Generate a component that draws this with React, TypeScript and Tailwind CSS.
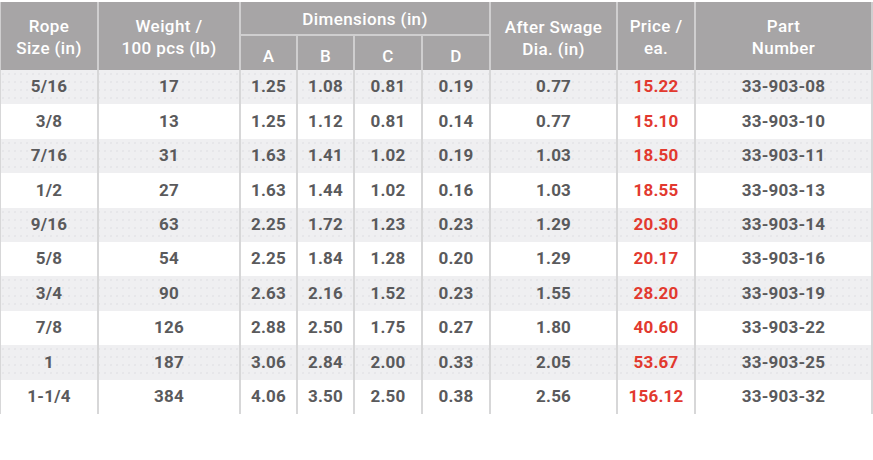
const rows = [
  ["5/16", "17", "1.25", "1.08", "0.81", "0.19", "0.77", "15.22", "33-903-08"],
  ["3/8", "13", "1.25", "1.12", "0.81", "0.14", "0.77", "15.10", "33-903-10"],
  ["7/16", "31", "1.63", "1.41", "1.02", "0.19", "1.03", "18.50", "33-903-11"],
  ["1/2", "27", "1.63", "1.44", "1.02", "0.16", "1.03", "18.55", "33-903-13"],
  ["9/16", "63", "2.25", "1.72", "1.23", "0.23", "1.29", "20.30", "33-903-14"],
  ["5/8", "54", "2.25", "1.84", "1.28", "0.20", "1.29", "20.17", "33-903-16"],
  ["3/4", "90", "2.63", "2.16", "1.52", "0.23", "1.55", "28.20", "33-903-19"],
  ["7/8", "126", "2.88", "2.50", "1.75", "0.27", "1.80", "40.60", "33-903-22"],
  ["1", "187", "3.06", "2.84", "2.00", "0.33", "2.05", "53.67", "33-903-25"],
  ["1-1/4", "384", "4.06", "3.50", "2.50", "0.38", "2.56", "156.12", "33-903-32"],
];

const widths = [97, 142, 57, 57, 68, 68, 127, 78, 179];

export default function App() {
  const th =
    "border-l-2 border-[#cfcecf] bg-[#a7a5a6] text-white font-medium text-center align-middle leading-[22px] text-[17px] tracking-[0.4px]";
  return (
    <div className="w-[873px] h-[460px] bg-white pt-[2px]" style={{ fontFamily: "Roboto, 'Liberation Sans', sans-serif" }}>
      <table className="table-fixed border-separate border-spacing-0 w-[873px]">
        <colgroup>
          {widths.map((w, i) => (
            <col key={i} style={{ width: w }} />
          ))}
        </colgroup>
        <thead>
          <tr className="h-[34px]">
            <th rowSpan={2} className={th + " !border-l-1 pt-[2px]"}>
              Rope
              <br />
              Size (in)
            </th>
            <th rowSpan={2} className={th + " pt-[2px]"}>
              Weight /
              <br />
              100 pcs (lb)
            </th>
            <th colSpan={4} className={th + " border-b-2 pt-[2px]"}>
              Dimensions (in)
            </th>
            <th rowSpan={2} className={th + " pt-[4px]"}>
              After Swage
              <br />
              Dia. (in)
            </th>
            <th rowSpan={2} className={th + " pt-[2px]"}>
              Price /
              <br />
              ea.
            </th>
            <th rowSpan={2} className={th + " border-r-2 pt-[2px]"}>
              Part
              <br />
              Number
            </th>
          </tr>
          <tr className="h-[34px]">
            {["A", "B", "C", "D"].map((l) => (
              <th key={l} className={th + " pt-[5px]"}>
                {l}
              </th>
            ))}
          </tr>
        </thead>
        <tbody>
          {rows.map((r, i) => (
            <tr
              key={i}
              className={
                i % 2 === 0
                  ? "h-[34.4px] bg-[#efeff1] bg-[radial-gradient(circle,#e6e6e9_0.7px,transparent_1px)] bg-[length:6px_8px]"
                  : "h-[34.4px] bg-white"
              }
            >
              {r.map((c, j) => (
                <td
                  key={j}
                  className={
                    "border-[#d7d7d8] text-center align-middle text-[17px] font-bold tracking-[0.2px] " +
                    (j === 0 ? "border-l-1 " : "border-l-2 ") +
                    (j === 8 ? "border-r-2 " : "") +
                    (j === 7 ? "text-[#e2392f]" : "text-[#5a5a5c]")
                  }
                >
                  {c}
                </td>
              ))}
            </tr>
          ))}
        </tbody>
      </table>
    </div>
  );
}
